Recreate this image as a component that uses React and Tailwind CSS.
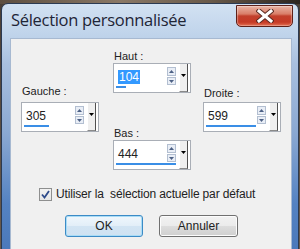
import React from "react";

const font = { fontFamily: '"Liberation Sans", Arial, sans-serif' };

function Tri({ up, color = "#4d6185" }) {
  return (
    <svg width="5" height="3" viewBox="0 0 5 3">
      {up ? <path d="M0 3 L2.5 0 L5 3 Z" fill={color} /> : <path d="M0 0 L2.5 3 L5 0 Z" fill={color} />}
    </svg>
  );
}

function SpinBox({ value, barClass, selected }) {
  return (
    <div className="w-[78px] h-[30px] border border-[#a9aeb6] bg-white flex">
      <div className="w-[53px] flex flex-col">
        <div className="pt-[6px] pl-[4px] h-[20px] text-[12px] leading-[14px] text-[#222222]">
          {selected ? (
            <span className="bg-[#3399ff] text-white px-[1px] inline-block leading-[12px] pt-[1px] pb-[1px]">{value}</span>
          ) : (
            <span>{value}</span>
          )}
        </div>
        <div className={`mt-[2px] ml-[2px] h-[2px] bg-[#3a8ee6] ${barClass}`} />
      </div>
      <div className="w-[9px] pt-[3px] flex flex-col gap-[1px]">
        <div className="h-[9px] border border-[#b3bfd1] bg-[#e9eef6] flex items-center justify-center">
          <Tri up />
        </div>
        <div className="h-[8px] border border-[#b3bfd1] bg-[#e9eef6] flex items-center justify-center">
          <Tri />
        </div>
      </div>
      <div className="ml-[3px] w-[9px] h-[28px] bg-[#efefef] border-l border-l-white border-r border-r-[#505050] border-b border-b-[#8a8a8a] flex items-center justify-center pb-[5px]">
        <Tri color="#000" />
      </div>
    </div>
  );
}

function Label({ children, cls }) {
  return <div className={`text-[11px] leading-[13px] text-[#222222] pl-[1px] ${cls || ""}`}>{children}</div>;
}

export default function App() {
  return (
    <div className="w-[300px] h-[249px] overflow-hidden relative bg-[linear-gradient(180deg,#4a3f36,#6b5b4c)]" style={font}>
      <div className="absolute left-0 top-0 w-[300px] h-[4px] bg-[linear-gradient(90deg,#5d4e40,#8a7866_40%,#6a5a4a_70%,#2c2520)]" />
      <div className="absolute left-[1px] top-[3px] w-[298px] h-[260px] rounded-t-[7px] border border-[#2b3a52] bg-[linear-gradient(180deg,#d2e1f2_0px,#c0d4eb_30px,#a9c0df_60px,#8aa8d2_130px,#5482c2_200px,#4a78ba_250px)] flex flex-col">
        <div className="h-[34px] flex items-start pl-[9px] pt-[5px]">
          <span className="text-[16.5px] leading-[22px] text-[#1e2536] tracking-[-0.3px]" style={{ fontFamily: '"Open Sans", "Liberation Sans", sans-serif' }}>
            Sélection personnalisée
          </span>
        </div>
        <div className="absolute right-[5px] top-[1px] w-[57px] h-[22px] rounded-b-[5px] border border-[#5e2018] bg-[linear-gradient(180deg,#e9b3a4_0%,#d97e68_40%,#c2402c_50%,#c53a26_80%,#e26a4c_100%)] flex items-center justify-center shadow-[inset_0_0_1px_1px_rgba(255,255,255,0.35)]">
          <svg width="18" height="14" viewBox="0 0 18 14">
            <path d="M3 2 L15 12 M15 2 L3 12" stroke="#5a2a22" strokeWidth="5" strokeLinecap="square" />
            <path d="M3 2 L15 12 M15 2 L3 12" stroke="#ffffff" strokeWidth="3" strokeLinecap="square" />
          </svg>
        </div>
        <div className="ml-[8px] mr-[6px] flex-1 bg-[#f0f0f0] border border-[#a7b9d1] border-b-0">
          <div className="flex pl-[10px]">
            <div className="w-[79px] pt-[46px]">
              <Label cls="mb-[4px]">Gauche :</Label>
              <SpinBox value="305" barClass="w-[25px]" />
            </div>
            <div className="ml-[13px] w-[78px] pt-[11px]">
              <Label>Haut :</Label>
              <SpinBox value="104" barClass="w-[10px]" selected />
              <div className="h-[34px]" />
              <Label>Bas :</Label>
              <SpinBox value="444" barClass="w-[60px]" />
            </div>
            <div className="ml-[12px] w-[78px] pt-[48px]">
              <Label cls="mb-[2px]">Droite :</Label>
              <SpinBox value="599" barClass="w-[50px]" />
            </div>
          </div>
          <div className="mt-[18px] pl-[28px] flex items-center h-[13px]">
            <div className="w-[13px] h-[13px] border border-[#8e8f8f] bg-[linear-gradient(180deg,#f2f2f2,#e6e6e6)] flex items-center justify-center">
              <svg width="9" height="9" viewBox="0 0 9 9">
                <path d="M1 4.5 L3.5 7.5 L8 1" stroke="#2d4a8a" strokeWidth="1.8" fill="none" />
              </svg>
            </div>
            <span className="ml-[4px] text-[12px] leading-[13px] tracking-[-0.15px] text-[#222222] whitespace-pre">Utiliser la  sélection actuelle par défaut</span>
          </div>
          <div className="mt-[14px] pl-[54px] flex gap-[16px]">
            <div className="w-[78px] h-[22px] rounded-[3px] border border-[#3c8bc6] bg-[linear-gradient(180deg,#f0f7fc,#e2eef8_50%,#d2e4f3_51%,#cfe2f2)] shadow-[inset_0_0_0_1px_#a9dcf6] flex items-center justify-center text-[12px] text-[#222222]">
              OK
            </div>
            <div className="w-[79px] h-[22px] rounded-[3px] border border-[#707070] bg-[linear-gradient(180deg,#f2f2f2,#ebebeb_50%,#dddddd_51%,#cfcfcf)] shadow-[inset_0_0_0_1px_#fcfcfc] flex items-center justify-center text-[12px] text-[#222222]">
              Annuler
            </div>
          </div>
        </div>
      </div>
    </div>
  );
}
